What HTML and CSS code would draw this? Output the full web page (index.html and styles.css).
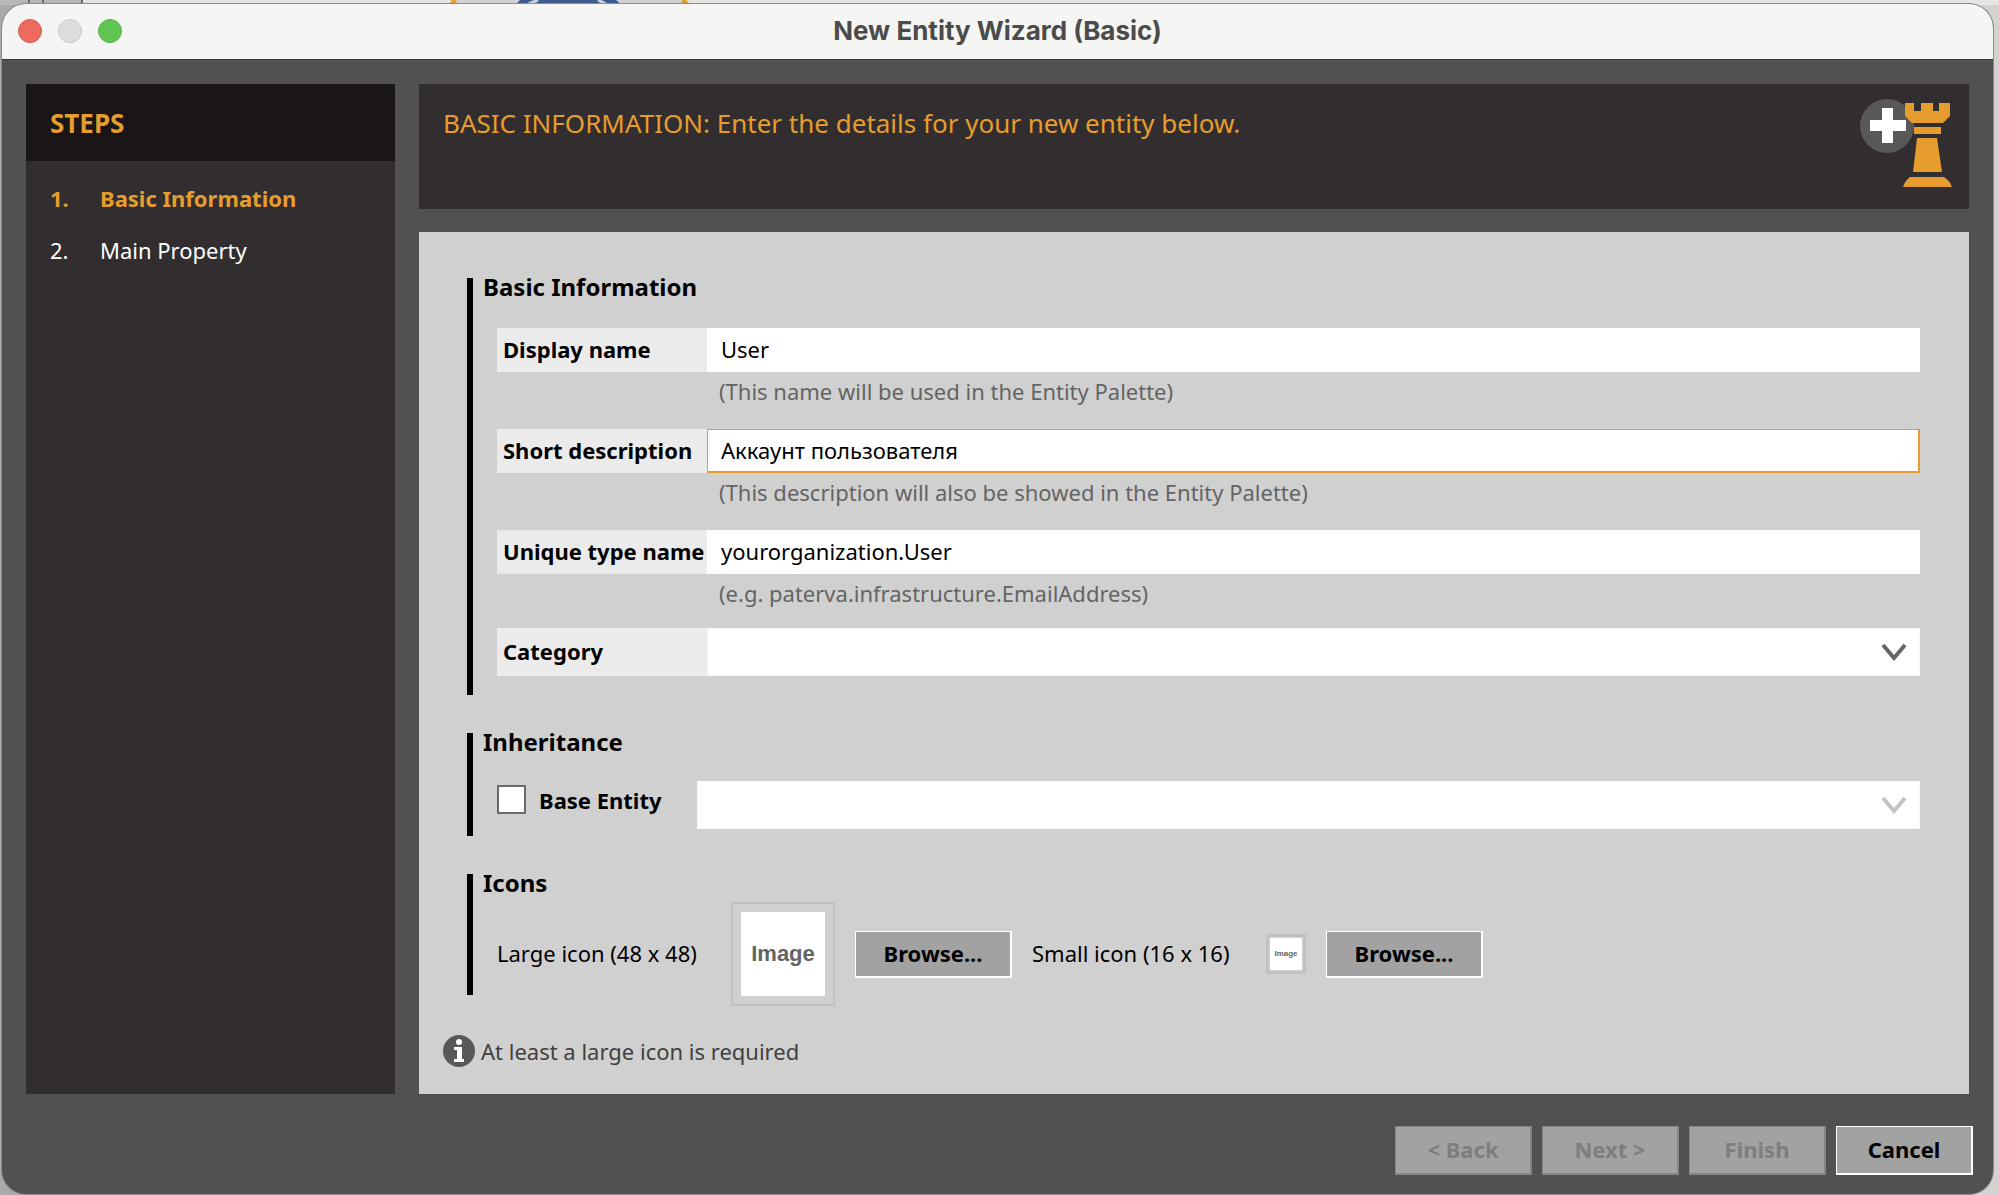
FILE: index.html
```html
<!DOCTYPE html>
<html lang="en">
   <head>
      <meta charset="UTF-8">
      <meta name="viewport" content="width=device-width, initial-scale=1">
      <title>New Entity Wizard (Basic)</title>
      <link rel="stylesheet" href="styles.css">
   </head>
   <body>
      <div class="desktop">
         <svg width="700" height="5" viewBox="0 0 700 5" aria-hidden="true">
            <path d="M0 0h82v5H0z" fill="#b9b8b7"/>
            <path d="M29 0v5M43 0v5M82 0v5" stroke="#6d6c6b" stroke-width="2"/>
            <path d="M455 0h229l4 5H452z" fill="#d3d3d3"/>
            <path d="M455 0l-4 6M683 0l5 6" stroke="#e79d2e" stroke-width="5"/>
            <path d="M520 0h96l6 5H515z" fill="#3d5c8c"/>
            <path d="M526 5l12-5M598 0l10 5" stroke="#c9d0dc" stroke-width="3"/>
         </svg>
      </div>
      <div class="window">
         <header class="titlebar">
            <div class="lights">
               <button class="light close" aria-label="Close"></button>
               <button class="light minimize" aria-label="Minimize" disabled></button>
               <button class="light zoom" aria-label="Zoom"></button>
            </div>
            <h1>New Entity Wizard (Basic)</h1>
         </header>
         <div class="wizard">
            <nav class="steps">
               <h2>STEPS</h2>
               <ol>
                  <li class="current"><span>1.</span>Basic Information</li>
                  <li><span>2.</span>Main Property</li>
               </ol>
            </nav>
            <div class="banner">
               <p>BASIC INFORMATION: Enter the details for your new entity below.</p>
               <svg class="rook" width="94" height="90" viewBox="0 0 94 90" aria-hidden="true">
                  <circle cx="27" cy="27" r="27" fill="#585858"/>
                  <path d="M45 4h9v8h7V4h12v8h6V4h11v13l-7 7H52l-7-7z" fill="#e79d2e"/>
                  <path d="M54 28h27v7H54zM57 39h20l5 34H53zM50 78h34q6 4 8 10H43q2-6 7-10z" fill="#e79d2e"/>
                  <path d="M22 9h11v12h13v11H33v12H22V32H10V21h12z" fill="#fff"/>
               </svg>
            </div>
            <main class="content">
               <section>
                  <h3>Basic Information</h3>
                  <div class="row">
                     <label for="display">Display name</label>
                     <input type="text" id="display" value="User">
                  </div>
                  <p class="help">(This name will be used in the Entity Palette)</p>
                  <div class="row">
                     <label for="description">Short description</label>
                     <input type="text" id="description" class="active" value="Аккаунт пользователя">
                  </div>
                  <p class="help">(This description will also be showed in the Entity Palette)</p>
                  <div class="row">
                     <label for="type">Unique type name</label>
                     <input type="text" id="type" value="yourorganization.User">
                  </div>
                  <p class="help last">(e.g. paterva.infrastructure.EmailAddress)</p>
                  <div class="row">
                     <label for="category">Category</label>
                     <div class="combo">
                        <select id="category"><option></option></select>
                        <svg width="26" height="18" viewBox="0 0 26 18" aria-hidden="true"><path d="M2 2l11 13L24 2"/></svg>
                     </div>
                  </div>
               </section>
               <section class="inheritance">
                  <h3>Inheritance</h3>
                  <div class="base">
                     <label><input type="checkbox">Base Entity</label>
                     <div class="combo">
                        <select aria-label="Base Entity" disabled><option></option></select>
                        <svg width="26" height="18" viewBox="0 0 26 18" aria-hidden="true"><path d="M2 2l11 13L24 2"/></svg>
                     </div>
                  </div>
               </section>
               <section class="icons">
                  <h3>Icons</h3>
                  <div class="pickers">
                     <span>Large icon (48 x 48)</span>
                     <div class="preview"><b>Image</b></div>
                     <button class="btn browse">Browse...</button>
                     <span>Small icon (16 x 16)</span>
                     <div class="preview small"><b>Image</b></div>
                     <button class="btn browse">Browse...</button>
                  </div>
               </section>
               <p class="notice">
                  <svg width="32" height="32" viewBox="0 0 32 32" aria-hidden="true">
                     <circle cx="16" cy="16" r="16" fill="#585858"/>
                     <circle cx="16" cy="7" r="3" fill="#fff"/>
                     <path d="M11 12h8v12h2v3H11v-3h3v-9h-3z" fill="#fff"/>
                  </svg>
                  At least a large icon is required
               </p>
            </main>
         </div>
         <footer class="actions">
            <button class="btn" disabled>&lt; Back</button>
            <button class="btn" disabled>Next &gt;</button>
            <button class="btn" disabled>Finish</button>
            <button class="btn">Cancel</button>
         </footer>
      </div>
   </body>
</html>
```
FILE: styles.css
```css
* { box-sizing:border-box; }
body { margin:0; min-height:100vh; display:flex; padding:4px 6px 1px 2px; background:linear-gradient(90deg,#aaa 0,#aaa 50%,#d3d2d0 50%); font-family:'Noto Sans','Open Sans',sans-serif; font-size:22px; line-height:30px; color:#000; }
h1, h2, h3, p, ol { margin:0; padding:0; font-size:22px; }
button, input, select { font:inherit; color:inherit; margin:0; }
.desktop { position:absolute; left:0; top:0; width:100%; height:5px; background:#e6e5e2; overflow:hidden; }
.desktop svg { display:block; }

.window { position:relative; flex:1; display:flex; flex-direction:column; background:#525051; border-radius:24px; overflow:hidden; box-shadow:0 0 0 1px #8c8b8a; }
.titlebar { display:flex; align-items:center; height:56px; padding:0 16px 2px; background:#f5f5f3; border-bottom:1px solid #383637; }
.titlebar h1 { flex:1; text-align:center; font-family:Inter,sans-serif; font-size:26px; color:#4b4b4b; padding-right:110px; }
.lights { display:flex; gap:16px; width:110px; }
.light { width:24px; height:24px; padding:0; border:1px solid #d95b50; border-radius:50%; background:#ed6a5e; }
.light.minimize { background:#dddddb; border-color:#c6c6c4; }
.light.zoom { background:#61c554; border-color:#55b048; }

.wizard { flex:1; display:grid; grid-template-columns:369px 1fr; grid-template-rows:125px 1fr; gap:23px 24px; padding:24px 24px 0; }
.steps { grid-row:1 / 3; background:#322e2f; }
.steps h2 { background:#1a1617; color:#e79d2e; font-size:26px; line-height:32px; padding:23px 24px 22px; }
.steps ol { list-style:none; padding:11px 24px; }
.steps li { display:flex; color:#fff; line-height:52px; }
.steps li span { width:50px; }
.steps .current { color:#e79d2e; font-weight:bold; }
.banner { display:flex; justify-content:space-between; align-items:flex-start; background:#322e2f; padding:15px 15px 0 24px; }
.banner p { color:#e79d2e; font-size:26px; line-height:48px; }

.content { background:#d0d0d0; padding:46px 49px 27px 24px; }
section { display:flow-root; margin:0 0 38px 24px; padding:0 0 19px 24px; border-left:6px solid #000; }
section h3 { margin:0 0 32px -14px; font-size:24px; line-height:18px; }
.row { display:grid; grid-template-columns:210px 1fr; }
.row label { display:flex; align-items:center; padding:0 0 2px 6px; background:#ebebeb; font-weight:bold; white-space:nowrap; }
input[type=text] { height:44px; min-width:0; padding:0 13px 2px; border:1px solid #fff; background:#fff; outline:none; }
input.active { border:2px solid #e79d2e; border-width:1px 2px 2px 1px; }
.help { margin-bottom:19px; padding-left:222px; line-height:38px; color:#646464; }
.help.last { margin-bottom:16px; }
.combo { display:grid; align-items:center; height:48px; background:#fff; }
.combo select, .combo svg { grid-area:1 / 1; }
.combo select { height:48px; width:100%; appearance:none; border:1px solid #f5f5f5; background:none; padding:0 12px; }
.combo svg { justify-self:end; margin-right:13px; pointer-events:none; fill:none; stroke:#666; stroke-width:4; }
.combo select:disabled + svg { stroke:#c4c4c4; }
.inheritance { padding-bottom:7px; }
.inheritance h3 { margin-bottom:30px; }
.base { display:grid; grid-template-columns:200px 1fr; }
.base label { display:flex; gap:13px; padding-top:4px; font-weight:bold; }
.base input { appearance:none; width:29px; height:29px; border:2px solid #6a6a6a; background:#fff; }
.icons { margin-bottom:40px; padding-bottom:0; }
.icons h3 { margin-bottom:10px; }
.pickers { display:flex; align-items:center; gap:20px; margin-bottom:-11px; }
.pickers span { min-width:214px; padding-bottom:2px; white-space:nowrap; }
.preview { display:flex; width:104px; height:104px; padding:8px; border:2px solid #c2c2c2; }
.preview b { flex:1; display:flex; align-items:center; justify-content:center; background:#fff; font-family:'Liberation Sans',sans-serif; color:#646464; }
.preview.small { width:40px; height:40px; padding:1px; border-width:3px; }
.preview.small b { font-size:8px; }
.notice { display:flex; align-items:center; gap:6px; color:#404040; }

.btn { width:137px; height:49px; padding:0 0 2px; border:1px solid #fff; border-width:1px 2px 2px 1px; background:#a2a2a2; font-weight:bold; }
.btn:disabled { color:#7e7e7e; border-color:#858585; }
.browse { width:157px; height:47px; }
.actions { display:flex; justify-content:flex-end; gap:10px; padding:32px 20px 19px; }
```
